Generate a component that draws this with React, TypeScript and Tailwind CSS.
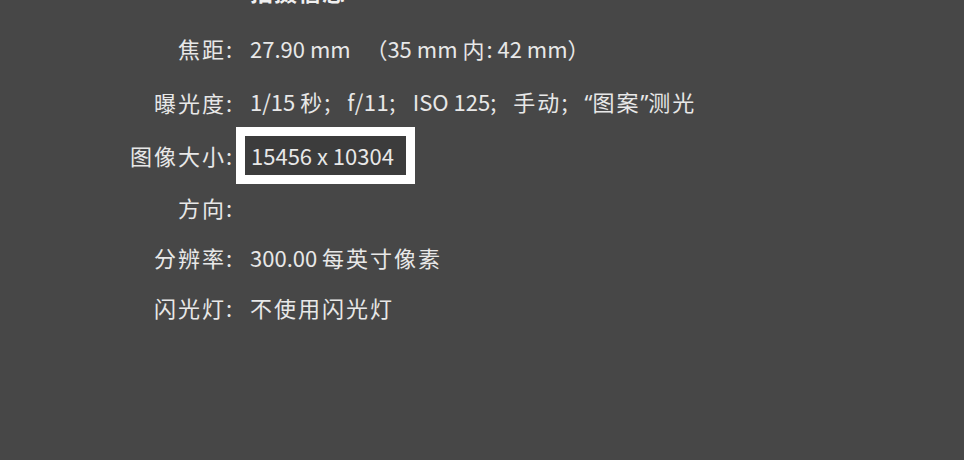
const font = { fontFamily: '"Noto Sans CJK SC", "Noto Sans", sans-serif' };
const latin = { fontFamily: '"Noto Sans", sans-serif' };

function Cjk({ children }: { children: React.ReactNode }) {
  return <span className="tracking-[2px]">{children}</span>;
}

function Gap() {
  return <span className="inline-block w-[17px]" />;
}

const rows: { label: string; value: React.ReactNode; h: string }[] = [
  {
    label: '焦距:',
    value: (
      <>
        27.90 mm   （35 mm <Cjk>内</Cjk>: 42 mm）
      </>
    ),
    h: 'h-[53px]',
  },
  {
    label: '曝光度:',
    value: (
      <>
        1/15 <Cjk>秒</Cjk>;<Gap />
        <span className="tracking-[0.5px]">f/11;</span>
        <Gap />
        ISO 125;<Gap />
        <Cjk>手动</Cjk>;<Gap />
        <span style={latin}>“</span>
        <Cjk>图案</Cjk>
        <span style={latin}>”</span>
        <Cjk>测光</Cjk>
      </>
    ),
    h: 'h-[54px]',
  },
  {
    label: '图像大小:',
    value: (
      <span className="-ml-[14px] inline-block border-[9px] border-white bg-[#3c3c3c] pl-[6px] pr-[12px] leading-[39px]">
        15456 x 10304
      </span>
    ),
    h: 'h-[53px]',
  },
  { label: '方向:', value: '', h: 'h-[50px]' },
  {
    label: '分辨率:',
    value: (
      <>
        300.00 <Cjk>每英寸像素</Cjk>
      </>
    ),
    h: 'h-[50px]',
  },
  { label: '闪光灯:', value: <Cjk>不使用闪光灯</Cjk>, h: 'h-[50px]' },
];

export default function App() {
  return (
    <div className="h-[460px] w-[964px] overflow-hidden bg-[#474747] text-[22px] text-[#e8e8e8]" style={font}>
      <div className="-mt-[23px] flex h-[28px]">
        <div className="w-[250px] shrink-0" />
        <div className="text-[23px] font-bold leading-[28px] tracking-[1px] text-[#f0f0f0]">拍摄信息</div>
      </div>
      <div className="mt-[17px] flex flex-col">
        {rows.map((r) => (
          <div key={r.label} className={`flex items-center ${r.h}`}>
            <div className="w-[234px] shrink-0 text-right tracking-[2px]">{r.label}</div>
            <div className="ml-[16px] whitespace-pre">{r.value}</div>
          </div>
        ))}
      </div>
    </div>
  );
}
